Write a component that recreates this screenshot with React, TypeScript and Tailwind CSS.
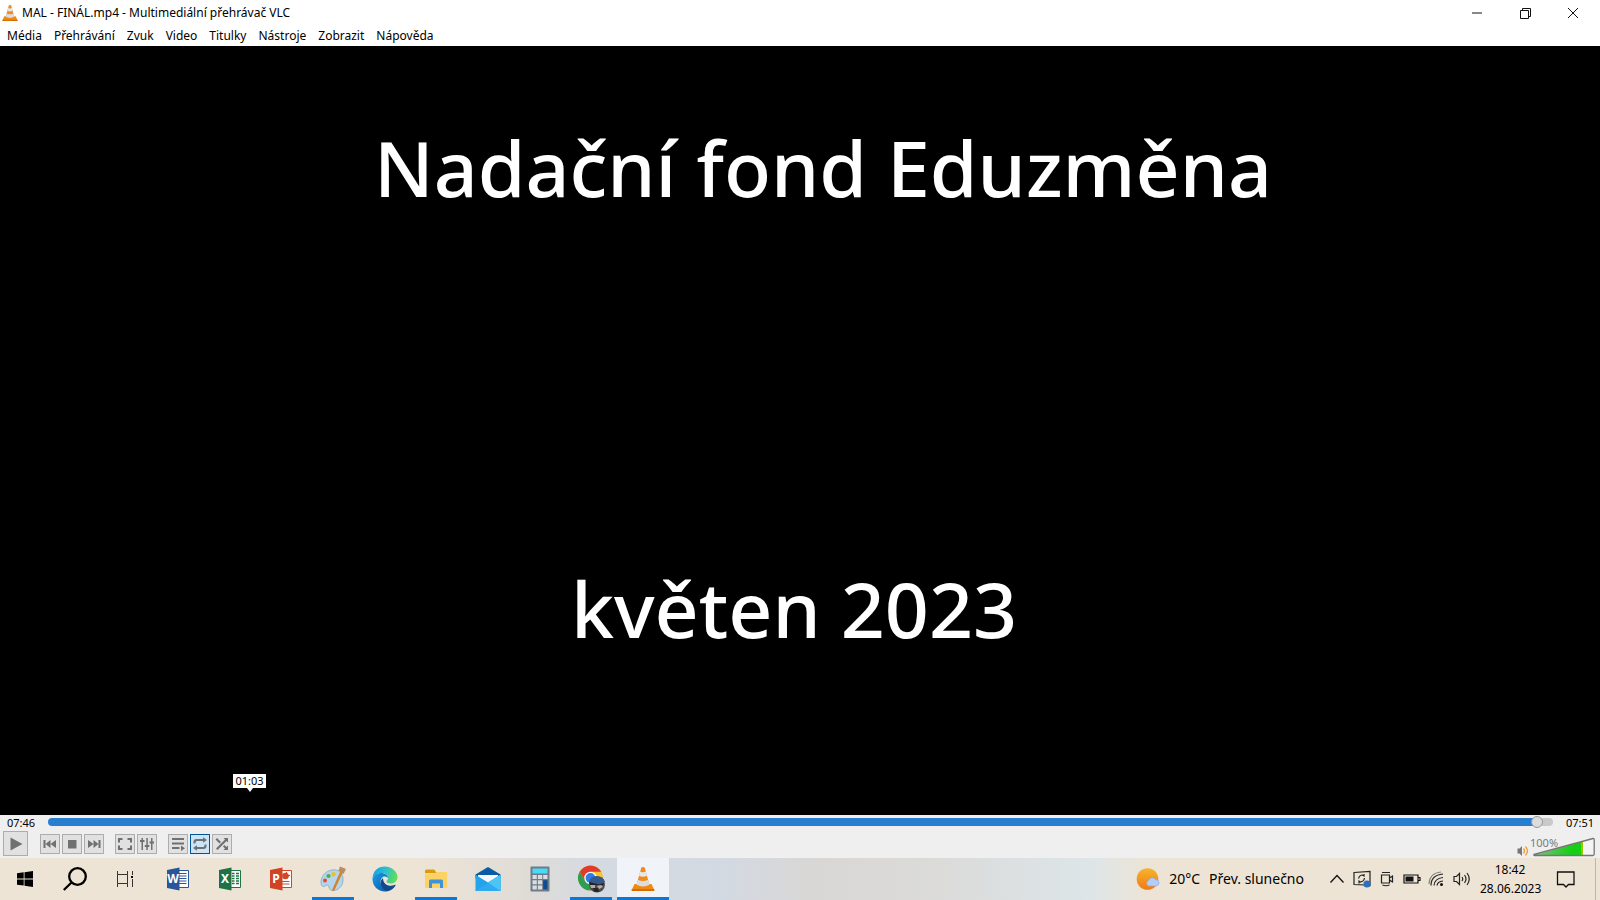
import { ReactNode } from "react";
import { clsx } from "clsx";

const menuItems = ["Média", "Přehrávání", "Zvuk", "Video", "Titulky", "Nástroje", "Zobrazit", "Nápověda"];

type TIconProps = { className?: string };

function Cone({ className }: TIconProps) {
  return (
    <svg viewBox="0 0 24 26" className={className} aria-hidden="true">
      <path d="M3.5 18h17l2.8 6q.3 1-1 1H1.7q-1.300 0-1-1z" fill="#f08a12" />
      <path d="M.9 23h22.200l.3 1q.2 1-1 1H1.600q-1.200 0-1-1z" fill="#d96d00" />
      <path d="M10.300 1.500Q12 .3 13.700 1.500L18.500 19q-6.500 3.500-13 0z" fill="#f28a1a" />
      <path d="M9.100 5.500q2.900 1.400 5.800 0l1.200 4.300q-4.100 1.800-8.200 0z" fill="#e4e6e8" />
      <path d="M6.800 13.800q5.200 2.400 10.400 0l1.300 4.900q-6.500 3.400-13 0z" fill="#d9dce0" />
    </svg>
  );
}

type TToolButtonProps = {
  label: string;
  active?: boolean;
  large?: boolean;
  children: ReactNode;
};

function ToolButton({ label, active, large, children }: TToolButtonProps) {
  return (
    <button
      type="button"
      aria-label={label}
      className={clsx(
        "flex items-center justify-center border text-[#707070]",
        large ? "size-[25px]" : "size-5",
        active ? "border-[#00549a] bg-[#cce4f7]" : "border-[#adadad] bg-[#e1e1e1]"
      )}
    >
      <svg viewBox="0 0 16 16" className="size-4 shrink-0" fill="currentColor" aria-hidden="true">
        {children}
      </svg>
    </button>
  );
}

function Controls() {
  return (
    <div className="flex h-[29px] items-center pl-[3px]">
      <ToolButton label="Přehrát" large>
        <path d="M2.500 1.500v13L14.500 8z" />
      </ToolButton>
      <div className="ml-3 flex gap-[2px]">
        <ToolButton label="Předchozí">
          <path d="M1.500 4h2v8h-2zM8.500 4v8l-5-4zM14 4v8L8.500 8z" />
        </ToolButton>
        <ToolButton label="Zastavit">
          <path d="M4 4h8.500v8.500H4z" />
        </ToolButton>
        <ToolButton label="Další">
          <path d="M12.500 4h2v8h-2zM7.500 4v8l5-4zM2 4v8l5.500-4z" />
        </ToolButton>
      </div>
      <div className="ml-[11px] flex gap-[2px]">
        <ToolButton label="Celá obrazovka">
          <path d="M1 2h4.500v2H3v2.500H1zM15 2h-4.500v2H13v2.500h2zM1 14h4.500v-2H3V9.500H1zM15 14h-4.500v-2H13V9.500h2z" />
        </ToolButton>
        <ToolButton label="Rozšířená nastavení">
          <path d="M2.500 2h1.500v12H2.500zM7.300 2h1.500v12H7.300zM12 2h1.500v12H12zM1 4h4.500v2H1zM5.800 9h4.500v2H5.800zM10.500 5.500H15v2h-4.500z" />
        </ToolButton>
      </div>
      <div className="ml-[11px] flex gap-[2px]">
        <ToolButton label="Seznam médií">
          <path d="M2 2h12v2H2zM2 6.500h12v2H2zM2 11h7.500v2H2zM11 9.500v5.500l4-2.700z" />
        </ToolButton>
        <ToolButton label="Opakovat" active>
          <path d="M1.500 7.500V6q0-3 3-3H11V1.200L15 4l-4 2.800V5H5Q3.500 5 3.500 6.500v1zM14.500 8.500V10q0 3-3 3H5v1.800L1 12l4-2.800V11h6q1.500 0 1.500-1.500v-1z" />
        </ToolButton>
        <ToolButton label="Náhodně">
          <path d="M1.500 3.500L3 2l4 4-1.500 1.500zM9.500 2H14v4.500l-1.500-1.500-9 9L2 12.500l9-9zM9 10.500L10.500 9l2 2L14 9.500V14H9.500l1.500-1.500z" />
        </ToolButton>
      </div>
      <Volume />
    </div>
  );
}

function Volume() {
  return (
    <div className="ml-auto flex items-end gap-1 self-stretch pr-[5px] pb-px">
      <button type="button" aria-label="Ztlumit">
        <svg viewBox="0 0 12 12" className="size-3" aria-hidden="true">
          <path d="M.5 3.500h2L5 1v10L2.500 8.500h-2z" fill="#777" />
          <path d="M6.500 3.500q2 2.500 0 5M8.500 1.500q4 4.500 0 9" fill="none" stroke="#f29a2e" strokeWidth="1.300" />
        </svg>
      </button>
      <div className="relative h-5 w-[62px]" role="img" aria-label="Hlasitost">
        <svg viewBox="0 0 62 20" className="size-full" aria-hidden="true">
          <defs>
            <linearGradient id="vol">
              <stop offset="0" stopColor="#7fbf7f" />
              <stop offset=".8" stopColor="#14d014" />
              <stop offset="1" stopColor="#14d014" />
            </linearGradient>
          </defs>
          <path d="M1 17.500L60 1.500q1.200-.2 1.200 1V17q0 1.500-1.500 1.500H1.500q-1 0-.5-1z" fill="#f4f4f4" />
          <path d="M2 18L48 5v13z" fill="url(#vol)" />
          <path d="M48 5l2-.7V18h-2z" fill="#9bc400" />
          <path d="M1 17.500L60 1.500q1.200-.2 1.200 1V17q0 1.500-1.500 1.500H1.500q-1 0-.5-1z" fill="none" stroke="#757575" strokeWidth="1.300" />
        </svg>
        <span className="absolute top-0 -left-[3px] text-[11px] leading-3 text-[#7a7a7a]">100%</span>
      </div>
    </div>
  );
}

type TOfficeProps = { letter: string; color: string; dark: string };

function Office({ letter, color, dark }: TOfficeProps) {
  return (
    <svg viewBox="0 0 24 24" className="size-6" aria-hidden="true">
      <path d="M12 3.500h10.500v17H12z" fill="#fff" stroke={color} />
      {letter === "W" && <path d="M13 6.500h7.500M13 9h7.500M13 11.500h7.500M13 14h7.500M13 16.500h7.500" stroke={color} />}
      {letter === "X" && (
        <path d="M14 6.500h2.500M18 6.500h3M14 9h2.500M18 9h3M14 11.500h2.500M18 11.500h3M14 14h2.500M18 14h3M14 16.500h2.500M18 16.500h3" stroke={color} strokeWidth="1.600" />
      )}
      {letter === "P" && (
        <>
          <circle cx="16.500" cy="9" r="3.300" fill={color} />
          <path d="M17.500 5v3.500H21M13 14.500h7.500M13 17h7.500" stroke={color} fill="none" />
        </>
      )}
      <path d="M1 3L13.500.5v23L1 21z" fill={dark} />
      <text x="7" y="16" fontSize="12" fontWeight="700" textAnchor="middle" fill="#fff">
        {letter}
      </text>
    </svg>
  );
}

function Paint() {
  return (
    <svg viewBox="0 0 26 26" className="size-[26px]" aria-hidden="true">
      <path d="M12 4C5 5 1 11 1 16c0 4 2 5.500 4 4s4-1 4 1 2 4 5 3.500c6-1 9.500-6 9-12C22.500 6 18 3.200 12 4z" fill="#b4d5ea" stroke="#7ca9c6" strokeWidth=".8" />
      <circle cx="5" cy="14.500" r="2" fill="#e24b3b" />
      <circle cx="8.500" cy="10" r="2.100" fill="#4fae4a" />
      <circle cx="13.500" cy="8.300" r="2.200" fill="#f2bf2c" />
      <path d="M20.500 5l2.500 1-8.500 18-2.500 1.500.5-2.500z" fill="#d4812f" />
      <path d="M18.500 4.500L20 .5 26 3l-2.500 5z" fill="#b98d60" />
    </svg>
  );
}

function Edge() {
  return (
    <svg viewBox="0 0 26 26" className="size-[26px]" aria-hidden="true">
      <defs>
        <linearGradient id="edgeTop" x1="0" y1=".3" x2="1" y2=".5">
          <stop offset="0" stopColor="#1b9de2" />
          <stop offset=".5" stopColor="#2cc0d0" />
          <stop offset="1" stopColor="#66de50" />
        </linearGradient>
        <linearGradient id="edgeLow" x1="0" y1="0" x2="1" y2="1">
          <stop offset="0" stopColor="#1a9de8" />
          <stop offset="1" stopColor="#0b57a8" />
        </linearGradient>
      </defs>
      <path d="M.5 13C.5 5 6 .5 13 .5S25.500 6 25.500 11c0 4-3 6.500-6.500 6.500-3 0-4.500-1-4.500-2 0-.8 1.500-1.500 1.500-3.500C16 9 13 7 9.500 7 5 7 2 9.500.5 13z" fill="url(#edgeTop)" />
      <path d="M.5 13C2 9 5.500 7 9 7c4 0 7 2.500 7 5-1-1-2-1.500-3.500-1.500C10 10.500 8.500 13 8.500 16c0 4.500 3.500 8.500 7 9.200C7 26.500.5 21 .5 13z" fill="url(#edgeLow)" />
      <path d="M11 12q-2.500 2-2.500 4.500c0 4 3 8.500 7 8.700 3.500-.5 6.500-3 8-5.700.3-.7 0-1-.7-.7-5 2.500-11.800.2-11.800-6.800z" fill="#11498c" />
    </svg>
  );
}

function Explorer() {
  return (
    <svg viewBox="0 0 24 24" className="size-6" aria-hidden="true">
      <path d="M1 4q0-1.500 1.500-1.500h7q1 0 1.500 1L12.500 6H1z" fill="#dd9a0e" />
      <path d="M1 6.500h10l2-1.500h9.500q.8 0 .8.800V21H1z" fill="#fdd264" />
      <path d="M5 21v-7q0-1.500 1.500-1.500h11q1.500 0 1.500 1.500v7h-3v-4.500H8V21z" fill="#3f93d8" />
    </svg>
  );
}

function Mail() {
  return (
    <svg viewBox="0 0 26 26" className="size-[26px]" aria-hidden="true">
      <path d="M.5 8.500L13 1l12.500 7.500v4H.5z" fill="#0b5aa6" />
      <path d="M3 9h20v8H3z" fill="#f6f8fb" />
      <path d="M.5 8.700L13 16.500l12.500-7.800V25H.5z" fill="#24a3ea" />
      <path d="M25.500 8.700L.5 25h25z" fill="#2faaf0" />
      <path d="M25.500 8.700L13 16.500 25.500 25z" fill="#4cc4f4" />
    </svg>
  );
}

function Calculator() {
  return (
    <svg viewBox="0 0 20 26" className="h-[26px] w-5" aria-hidden="true">
      <rect x=".5" y=".5" width="19" height="25" rx="1" fill="#717b87" />
      <path d="M2.500 2.500h15v5h-15z" fill="#46dcf8" />
      <path d="M2.500 9h4.300v4H2.500zM7.900 9h4.300v4H7.900zM13.200 9h4.300v4h-4.300zM2.500 14.200h4.300v4H2.500zM7.900 14.200h4.300v4H7.900zM2.500 19.400h4.300v4H2.500zM7.900 19.400h4.300v4H7.900z" fill="#d8dde2" />
      <path d="M13.200 14.200h4.300v9.200h-4.300z" fill="#0f4a94" />
    </svg>
  );
}

function Chrome() {
  return (
    <svg viewBox="0 0 28 28" className="size-7" aria-hidden="true">
      <circle cx="13.500" cy="13" r="12.500" fill="#f6c32c" />
      <path d="M2.700 6.700A12.500 12.500 0 0 1 24.300 6.700H13.500L8 16z" fill="#e13b30" />
      <path d="M2.700 6.700A12.500 12.500 0 0 0 13.500 25.500L19 16 8 16z" fill="#2f9e50" />
      <circle cx="13.500" cy="13" r="6.200" fill="#fff" />
      <circle cx="13.500" cy="13" r="4.900" fill="#2f7de8" />
      <circle cx="20" cy="19.500" r="8" fill="#4d4b4d" />
      <path d="M12 17q1-5.500 7.500-6 7 0 8.500 6l-6 2.500z" fill="#35598c" />
      <path d="M12 17l10 2.500 5-1.500-1 2H13z" fill="#1d2128" />
      <path d="M13 20h5v3h-4zM20 21l4-1 2 2-4 2z" fill="#b5aba3" />
      <path d="M16 23h5l1 4-5-.5z" fill="#262322" />
    </svg>
  );
}

type TTask = { name: string; icon: ReactNode; open?: boolean; active?: boolean };

const tasks: TTask[] = [
  { name: "Word", icon: <Office letter="W" color="#2b579a" dark="#2a5699" /> },
  { name: "Excel", icon: <Office letter="X" color="#217346" dark="#207245" /> },
  { name: "PowerPoint", icon: <Office letter="P" color="#d24726" dark="#d04423" /> },
  { name: "Malování", icon: <Paint />, open: true },
  { name: "Edge", icon: <Edge /> },
  { name: "Průzkumník souborů", icon: <Explorer />, open: true },
  { name: "Pošta", icon: <Mail /> },
  { name: "Kalkulačka", icon: <Calculator /> },
  { name: "Chrome", icon: <Chrome />, open: true },
  { name: "VLC", icon: <Cone className="h-[26px] w-6" />, open: true, active: true },
];

function Tray() {
  return (
    <div className="ml-auto flex h-full items-center">
      <button type="button" className="flex items-center gap-[9px] text-sm whitespace-nowrap">
        <svg viewBox="0 0 24 24" className="size-6" aria-hidden="true">
          <defs>
            <linearGradient id="sun" x1="0" y1="0" x2="0" y2="1">
              <stop offset="0" stopColor="#f5b52c" />
              <stop offset="1" stopColor="#f27a16" />
            </linearGradient>
          </defs>
          <circle cx="11.500" cy="12" r="10.800" fill="url(#sun)" />
          <path d="M12.500 19a3 3 0 0 1 0-5.500 4 4 0 0 1 7-1 3.300 3.300 0 0 1 1 6.500z" fill="#b2cdf7" stroke="#86a9e6" strokeWidth=".6" />
        </svg>
        <span>20°C</span>
        <span>Přev. slunečno</span>
      </button>
      <div className="ml-6 flex items-center gap-[7px]">
        <svg viewBox="0 0 18 18" className="size-[18px]" fill="none" stroke="#111" strokeWidth="1.300">
          <path d="M2.500 12.500L9 5.500l6.500 7" />
        </svg>
        <svg viewBox="0 0 18 18" className="size-[18px]" fill="none" stroke="#222" strokeWidth="1.200">
          <path d="M1 2.500l16-1v14l-5-.5-11-.5z" />
          <path d="M5.500 8.500q1-3.500 4-3.500l1.500 1V4M11.500 8q-.5 3.500-4 4L6 11v2.500" />
          <circle cx="14" cy="14" r="3.600" fill="#2c6fbe" stroke="none" />
        </svg>
        <svg viewBox="0 0 18 18" className="size-[18px]" fill="none" stroke="#222" strokeWidth="1.200">
          <path d="M3.500 5h8v8h-8zM11.500 8l3-2v6l-3-2M4 2.500h8M4.500 15q3.500 1.500 7 0" />
        </svg>
        <svg viewBox="0 0 18 18" className="size-[18px]" fill="none" stroke="#111" strokeWidth="1.200">
          <path d="M1 5h14v8H1zM15.500 7.500h1.500v3h-1.500" />
          <path d="M2.500 6.500h8v5h-8z" fill="#111" stroke="none" />
        </svg>
        <svg viewBox="0 0 18 18" className="size-[18px]" fill="none" stroke="#222" strokeWidth="1.200">
          <path d="M3 15.500Q3 5 15 4M6 15.500Q6.500 8.500 15 7.500M9 15.500q.5-4 6-4.500" />
          <circle cx="13.500" cy="14.500" r="1.500" fill="#111" stroke="none" />
          <path d="M1 14Q1.500 3 13 2" stroke="#888" />
        </svg>
        <svg viewBox="0 0 18 18" className="size-[18px]" fill="none" stroke="#222" strokeWidth="1.200">
          <path d="M1 6.500h2.500l3-3v11l-3-3H1zM9 7q1.500 2 0 4M11.500 5q3 4 0 8M14 3q4.500 6 0 12" />
        </svg>
      </div>
      <button type="button" className="ml-[9px] w-[60px] text-center text-xs leading-[19px]">
        <span className="block">18:42</span>
        <span className="block">28.06.2023</span>
      </button>
      <button type="button" aria-label="Oznámení" className="mr-[19px] ml-4">
        <svg viewBox="0 0 20 20" className="size-5" fill="none" stroke="#111" strokeWidth="1.300" aria-hidden="true">
          <path d="M1.500 3h16.500v12.500h-5.500L10 18l-2.500-2.500h-6z" />
        </svg>
      </button>
      <div className="h-full w-[5px] border-l border-[#bdb5a8]" />
    </div>
  );
}

function Taskbar() {
  return (
    <footer className="flex h-[42px] items-center bg-[linear-gradient(to_right,#ede4d5_26%,#dfdcd7_33%,#d5dae1_37%,#d3d9e2_45%,#d9d7d5_51%,#dbdbda_59%,#dde5e8_68%,#ede4d5_72%)]">
      <div className="flex h-full w-[152px]">
        <button type="button" aria-label="Start" className="flex w-[50px] items-center justify-center">
          <svg viewBox="0 0 16 16" className="size-4" aria-hidden="true">
            <path d="M0 2.200L6.700 1.300v6.200H0zM7.500 1.200L16 0v7.500H7.500zM0 8.400h6.700v6.200L0 13.700zM7.500 8.400H16V16l-8.500-1.200z" />
          </svg>
        </button>
        <button type="button" aria-label="Hledat" className="flex w-[50px] items-center justify-center">
          <svg viewBox="0 0 24 24" className="size-6" fill="none" stroke="#000" strokeWidth="2.300" aria-hidden="true">
            <circle cx="14.500" cy="9.500" r="8.300" />
            <path d="M8.500 15.500L.8 23" />
          </svg>
        </button>
        <button type="button" aria-label="Zobrazení úloh" className="flex w-[50px] items-center justify-center">
          <svg viewBox="0 0 18 18" className="size-[18px]" fill="none" stroke="#333" aria-hidden="true">
            <path d="M1.500 1v3.500h10V1M1.500 17v-3.500h10V17M1.500 4.500v9M11.500 4.500v9M16.500 1v4M16.500 9v8" />
            <path d="M15 6h2v2h-2z" fill="#000" stroke="none" />
          </svg>
        </button>
      </div>
      <nav className="flex h-full w-[517px]">
        {tasks.map((task) => (
          <button
            key={task.name}
            type="button"
            aria-label={task.name}
            className={clsx("flex flex-1 flex-col items-center", task.active && "bg-[#f0f3f7]")}
          >
            <span className="flex flex-1 items-center pt-[3px]">{task.icon}</span>
            <span className={clsx("h-[3px]", task.open && "bg-[#0a78d4]", task.active ? "w-full" : "w-[42px]")} />
          </button>
        ))}
      </nav>
      <Tray />
    </footer>
  );
}

export default function App() {
  return (
    <div className="flex h-screen flex-col overflow-hidden bg-white font-['Noto_Sans',sans-serif] text-black">
      <header className="flex h-[25px] items-center pl-[2px]">
        <Cone className="h-[18px] w-4" />
        <h1 className="ml-1 text-xs">MAL - FINÁL.mp4 - Multimediální přehrávač VLC</h1>
        <div className="ml-auto flex">
          {["M3 8h10", "M3.500 5.500h8v8h-8zM5.500 5V3.500h8v8H12", "M3 3l10 10M13 3L3 13"].map((d, i) => (
            <button
              key={d}
              type="button"
              aria-label={["Minimalizovat", "Obnovit", "Zavřít"][i]}
              className="flex w-12 justify-center"
            >
              <svg viewBox="0 0 16 16" className="size-4" fill="none" stroke="#111" aria-hidden="true">
                <path d={d} />
              </svg>
            </button>
          ))}
          <div className="w-[3px]" />
        </div>
      </header>
      <nav className="flex h-[21px] items-center gap-3 pl-[7px] text-xs">
        {menuItems.map((item) => (
          <button key={item} type="button">
            {item}
          </button>
        ))}
      </nav>

      <main className="relative flex flex-1 flex-col items-center bg-black pt-[69px] text-[77px] leading-[106px] font-medium text-white">
        <p className="pl-[46px]">Nadační fond Eduzměna</p>
        <p className="mt-[335px] pr-[12px]">květen 2023</p>
        <div className="absolute bottom-[23px] left-[233px] flex flex-col items-center text-[11px] font-normal text-black">
          <span className="h-[14px] w-[33px] bg-white text-center leading-[14px]">01:03</span>
          <span className="h-0 w-0 border-x-[3px] border-t-4 border-x-transparent border-t-white" />
        </div>
      </main>

      <section className="h-[43px] bg-[#efefef]">
        <div className="flex h-[14px] items-center text-[11px] leading-4">
          <span className="w-[48px] pt-px pl-[7px]">07:46</span>
          <input
            type="range"
            aria-label="Pozice"
            min={0}
            max={471}
            defaultValue={468}
            className="h-2 min-w-0 flex-1 appearance-none rounded bg-linear-to-r from-[#287fd0] from-99% to-[#c9c9c9] to-99% [&::-webkit-slider-thumb]:size-3 [&::-webkit-slider-thumb]:appearance-none [&::-webkit-slider-thumb]:rounded-full [&::-webkit-slider-thumb]:border [&::-webkit-slider-thumb]:border-[#999] [&::-webkit-slider-thumb]:bg-[#dcdcdc]"
          />
          <span className="w-[47px] pt-px pl-[13px]">07:51</span>
        </div>
        <Controls />
      </section>
      <Taskbar />
    </div>
  );
}
